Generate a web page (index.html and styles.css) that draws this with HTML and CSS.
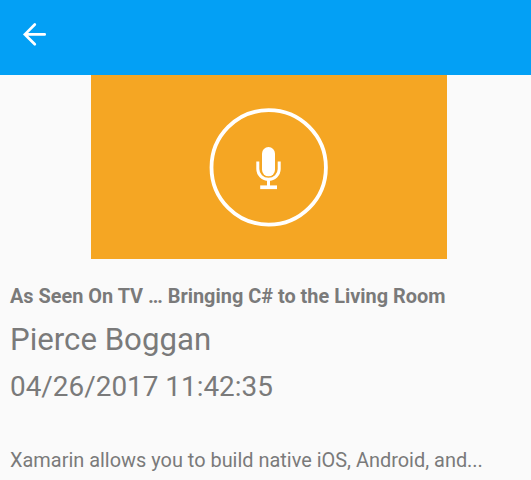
FILE: index.html
```html
<!DOCTYPE html>
<html lang="en">
<head>
<meta charset="utf-8">
<title>Session</title>
<link rel="stylesheet" href="styles.css">
</head>
<body>
<header class="toolbar">
<svg class="back" viewBox="0 0 26 26" width="26" height="26"><path d="M12.800 2.500 2.900 12.400l9.900 9.900M2.900 12.400h19.800"/></svg>
</header>
<main>
<div class="banner">
<svg width="120" height="120" viewBox="0 0 120 120">
<circle cx="59.700" cy="60.400" r="57.200" fill="none" stroke="#fff" stroke-width="3.800"/>
<rect x="53" y="40" width="13" height="29.300" rx="6.500" fill="#fff"/>
<path d="M48.800 54.500v7.600a10.700 10.200 0 0 0 21.400 0v-7.600M59.500 72v8" fill="none" stroke="#fff" stroke-width="3"/>
<path d="M51.200 78.400h16.800v3.700h-16.800z" fill="#fff"/>
</svg>
</div>
<section class="details">
<h1 class="title">As Seen On TV … Bringing C# to the Living Room</h1>
<p class="speaker">Pierce Boggan</p>
<p class="date">04/26/2017 11:42:35</p>
<p class="summary">Xamarin allows you to build native iOS, Android, and...</p>
</section>
</main>
</body>
</html>
```
FILE: styles.css
```css
* { box-sizing: border-box; }
body { margin: 0; height: 480px; overflow: hidden; background: #fafafa; color: #7a7a7a; font-family: Roboto, sans-serif; }
.toolbar { height: 75px; background: #03a0f5; display: flex; align-items: center; padding: 0 0 5px 22px; }
.back { fill: none; stroke: #fff; stroke-width: 2.7; stroke-linecap: round; }
.banner { width: 356px; height: 184px; margin-left: 91px; background: #f5a623; display: flex; align-items: center; justify-content: center; }
.details { padding: 26px 10px 0; white-space: nowrap; }
.title, .speaker, .date, .summary { margin: 0; }
.title { font-size: 19.9px; line-height: 24px; font-weight: 700; }
.speaker { font-size: 31.2px; line-height: 36px; margin-top: 13px; }
.date { font-size: 27.9px; line-height: 36px; margin-top: 11px; }
.summary { font-size: 19.93px; line-height: 24px; margin-top: 44px; }
```
